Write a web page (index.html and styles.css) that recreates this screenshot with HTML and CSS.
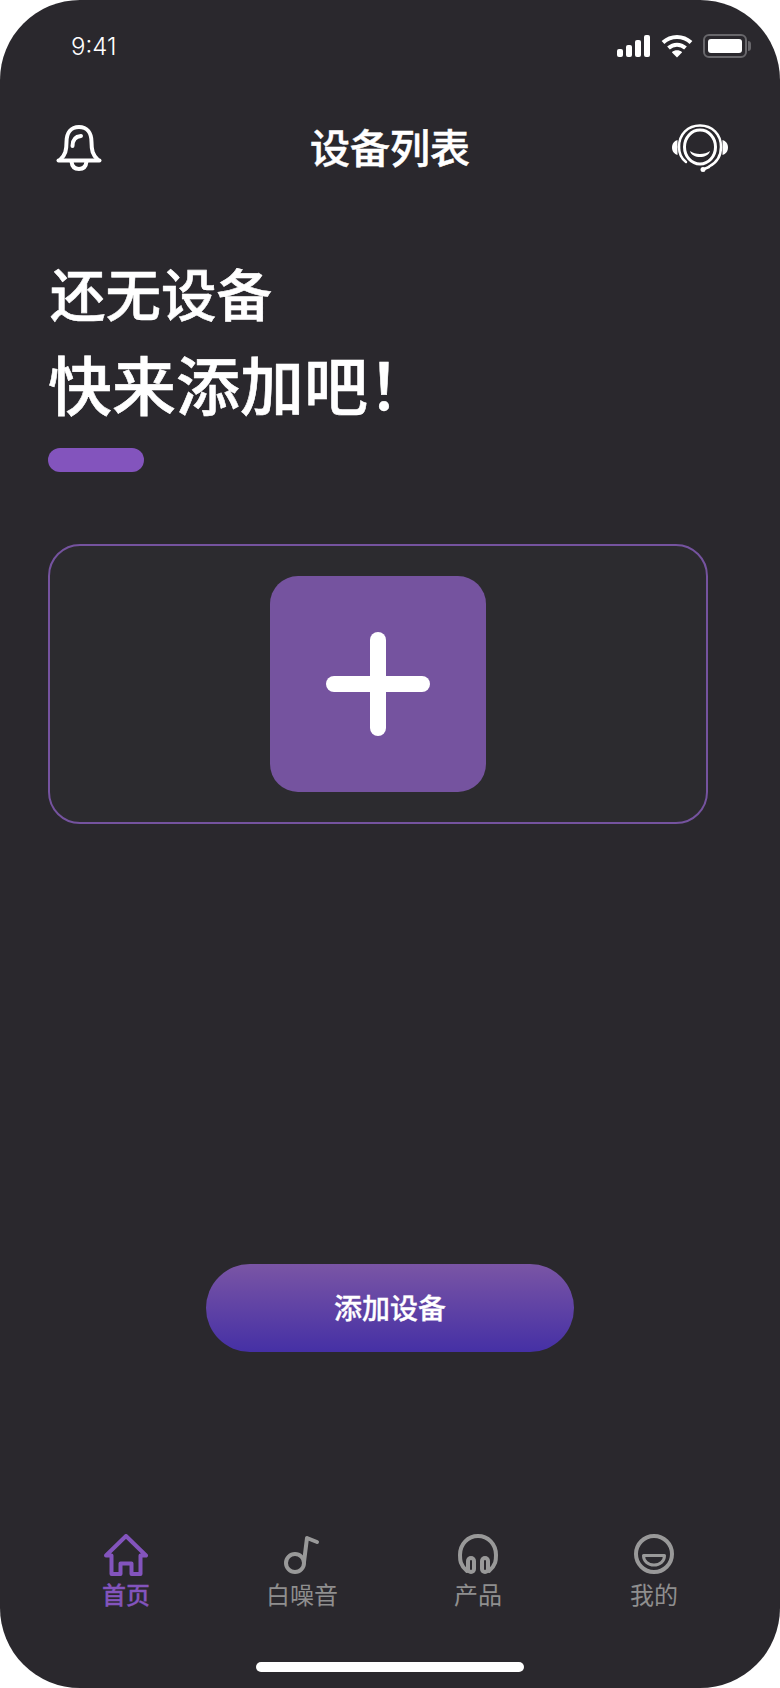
FILE: index.html
```html
<!DOCTYPE html>
<html lang="zh-CN">
<head>
  <meta charset="UTF-8" />
  <meta name="viewport" content="width=device-width, initial-scale=1.0">
  <title>设备列表</title>
  <link rel="stylesheet" href="styles.css">
</head>
<body>

<div class="phone">
  <!-- Status bar -->
  <div class="status-bar">
    <span class="time">9:41</span>
    <div class="status-icons">
      <svg class="icon-signal" width="34" height="22" viewBox="0 0 34 22">
        <rect x="0" y="14" width="6" height="8" rx="2"/>
        <rect x="9" y="10" width="6" height="12" rx="2"/>
        <rect x="18" y="5" width="6" height="17" rx="2"/>
        <rect x="27" y="0" width="6" height="22" rx="2"/>
      </svg>
      <svg class="icon-wifi" width="32" height="24" viewBox="0 0 32 24">
        <path d="M2 8.500C10 1 22 1 30 8.500" />
        <path d="M7.500 14C12.500 9.500 19.500 9.500 24.500 14" />
        <path class="wifi-dot" d="M16 23.500L10.800 18.200C13.800 15.600 18.200 15.600 21.200 18.200Z" />
      </svg>
      <div class="battery">
        <div class="battery-fill"></div>
      </div>
    </div>
  </div>

  <!-- Header -->
  <div class="header">
    <svg class="icon-bell" width="46" height="46" viewBox="0 0 46 46">
      <path d="M2.500 35.500H43.500" />
      <path d="M4 35C9.500 30 10.500 25 10.500 17C10.500 8 15 2 23 2C31 2 35.500 8 35.500 17C35.500 25 36.500 30 42 35" />
      <path d="M15.500 36.500C16 41.500 19 44 23 44C27 44 30 41.500 30.500 36.500" />
      <path d="M16.500 21C16.500 15 19.500 11.500 25 11" />
    </svg>
    <h2 class="title">设备列表</h2>
    <svg class="icon-service" width="56" height="48" viewBox="0 0 56 48">
      <path class="thin" d="M7 23C7 10 16 1.500 28 1.500C40 1.500 49 10 49 23C49 33 44 39 37 42.500" />
      <path class="thin" d="M7 23C7 30 10 35 14 38" />
      <ellipse class="ring" cx="28" cy="23" rx="15.500" ry="17" />
      <path class="solid" d="M5.500 16C2 17 0 20 0 23.500C0 27 2 30 5.500 31Z" />
      <path class="solid" d="M50.500 16C54 17 56 20 56 23.500C56 27 54 30 50.500 31Z" />
      <path class="solid" d="M18 27C23 31 33 31 38 27C36 35 20 35 18 27Z" />
      <path class="thin" d="M37 43L31 45.500" />
      <circle class="solid" cx="31" cy="45.500" r="2.500" />
    </svg>
  </div>

  <!-- Empty message -->
  <div class="hero">
    <h1 class="hero-line">还无设备</h1>
    <h1 class="hero-line big">快来添加吧！</h1>
    <div class="accent"></div>
  </div>

  <!-- Add card -->
  <div class="add-card">
    <div class="add-tile">
      <span class="plus"></span>
    </div>
  </div>

  <button class="add-btn">添加设备</button>

  <!-- Tabs -->
  <div class="tabbar">
    <div class="tab active">
      <svg class="tab-icon" width="44" height="42" viewBox="0 0 44 42">
        <path d="M22 2L42 21.500H36.500V40H27.500V29.500H16.500V40H7.500V21.500H2Z" />
      </svg>
      <span>首页</span>
    </div>
    <div class="tab">
      <svg class="tab-icon" width="36" height="42" viewBox="0 0 36 42">
        <circle cx="11" cy="29" r="9" />
        <path d="M20 28L23 4L33 8" />
      </svg>
      <span>白噪音</span>
    </div>
    <div class="tab">
      <svg class="tab-icon" width="40" height="42" viewBox="0 0 40 42">
        <path d="M9 37C2 31 2 26 2 21C2 10 10 2 20 2C30 2 38 10 38 21C38 26 38 31 31 37" />
        <rect class="cup" x="8" y="22" width="10" height="18" rx="5" />
        <rect class="cup" x="22" y="22" width="10" height="18" rx="5" />
        <path class="slit" d="M13 27V35M27 27V35" />
      </svg>
      <span>产品</span>
    </div>
    <div class="tab">
      <svg class="tab-icon" width="40" height="42" viewBox="0 0 40 42">
        <circle cx="20" cy="20" r="18" />
        <path class="mouth" d="M9.500 21.500H30.500C30.500 27 26 31 20 31C14 31 9.500 27 9.500 21.500Z" />
      </svg>
      <span>我的</span>
    </div>
  </div>

  <div class="home-bar"></div>
</div>

</body>
</html>
```

FILE: styles.css
```css
* {
  box-sizing: border-box;
}

body {
  margin: 0;
  padding: 0;
  background: #ffffff;
  font-family: "Noto Sans CJK SC", "Noto Sans", sans-serif;
}

.phone {
  width: 780px;
  height: 1688px;
  background: #2a282d;
  border-radius: 80px;
  display: flex;
  flex-direction: column;
  align-items: center;
  overflow: hidden;
}

/* status bar */
.status-bar {
  width: 100%;
  height: 92px;
  padding: 0 33px 0 71px;
  display: flex;
  justify-content: space-between;
  align-items: center;
}

.time {
  font-family: Inter, "Liberation Sans", sans-serif;
  font-weight: 300;
  font-size: 24px;
  color: #ffffff;
}

.status-icons {
  display: flex;
  align-items: center;
  gap: 10px;
}

.icon-signal {
  fill: #ffffff;
}

.icon-wifi {
  fill: none;
  stroke: #ffffff;
  stroke-width: 4px;
}

.icon-wifi .wifi-dot {
  fill: #ffffff;
  stroke: none;
}

.battery {
  position: relative;
  width: 44px;
  height: 24px;
  padding: 3px;
  border: 2px solid #68676b;
  border-radius: 6px;
}

.battery::after {
  content: "";
  position: absolute;
  top: 5px;
  right: -6px;
  width: 3px;
  height: 10px;
  background: #68676b;
  border-radius: 0 3px 3px 0;
}

.battery-fill {
  height: 100%;
  background: #ffffff;
  border-radius: 3px;
}

/* header */
.header {
  width: 100%;
  height: 60px;
  margin-top: 26px;
  padding: 0 52px;
  display: grid;
  grid-template-columns: 1fr auto 1fr;
  align-items: center;
}

.icon-bell {
  margin-left: 4px;
  fill: none;
  stroke: #ffffff;
  stroke-width: 4px;
  stroke-linecap: round;
  stroke-linejoin: round;
}

.title {
  margin: 0 0 4px;
  font-size: 40px;
  font-weight: 500;
  line-height: 56px;
  color: #ffffff;
  -webkit-text-stroke: 0.5px #ffffff;
}

.icon-service {
  justify-self: end;
  fill: none;
}

.icon-service .thin {
  stroke: #ffffff;
  stroke-width: 2.5px;
  stroke-linecap: round;
  fill: none;
}

.icon-service .ring {
  stroke: #ffffff;
  stroke-width: 3px;
  fill: none;
}

.icon-service .solid {
  fill: #ffffff;
}

/* hero text */
.hero {
  width: 100%;
  margin-top: 74px;
  padding-left: 48px;
}

.hero-line {
  margin: 0 0 0 2px;
  font-size: 55.5px;
  font-weight: 500;
  line-height: 80px;
  color: #ffffff;
  -webkit-text-stroke: 0.6px #ffffff;
}

.hero-line.big {
  font-size: 64px;
  line-height: 92px;
  margin: 4px 0 0;
}

.accent {
  width: 96px;
  height: 24px;
  margin-top: 20px;
  background: #8354bd;
  border-radius: 12px;
}

/* add card */
.add-card {
  width: 660px;
  height: 280px;
  margin-top: 72px;
  margin-right: 24px;
  background: #2c2b2f;
  border: 2px solid #75539f;
  border-radius: 32px;
  display: flex;
  justify-content: center;
  align-items: center;
}

.add-tile {
  position: relative;
  width: 216px;
  height: 216px;
  background: #75539f;
  border-radius: 28px;
}

.plus::before,
.plus::after {
  content: "";
  position: absolute;
  background: #ffffff;
  border-radius: 8px;
}

.plus::before {
  top: 100px;
  left: 56px;
  width: 104px;
  height: 16px;
}

.plus::after {
  top: 56px;
  left: 100px;
  width: 16px;
  height: 104px;
}

.add-btn {
  width: 368px;
  height: 88px;
  margin-top: 440px;
  padding: 0 0 3px;
  border: none;
  border-radius: 44px;
  background: linear-gradient(180deg, #7a55a5 0%, #4530a5 100%);
  color: #ffffff;
  font-family: inherit;
  font-size: 28px;
  font-weight: 500;
  -webkit-text-stroke: 0.3px #ffffff;
}

/* tabs */
.tabbar {
  width: 100%;
  margin-top: auto;
  padding: 0 38px;
  display: grid;
  grid-template-columns: repeat(4, 1fr);
}

.tab {
  display: flex;
  flex-direction: column;
  align-items: center;
  gap: 1px;
  font-size: 24px;
  line-height: 34px;
  color: #8f8f8f;
}

.tab-icon {
  fill: none;
  stroke: #999999;
  stroke-width: 4px;
  stroke-linecap: round;
  stroke-linejoin: round;
}

.tab-icon .cup {
  fill: #999999;
  stroke: none;
}

.tab-icon .slit {
  stroke: #2a282d;
  stroke-width: 2px;
}

.tab-icon .mouth {
  stroke-width: 3px;
}

.tab.active {
  color: #8354bd;
  font-weight: 500;
  -webkit-text-stroke: 0.3px #8354bd;
}

.tab.active .tab-icon {
  stroke: #8354bd;
}

.home-bar {
  width: 268px;
  height: 10px;
  margin-top: 51px;
  margin-bottom: 16px;
  background: #ffffff;
  border-radius: 5px;
}
```
